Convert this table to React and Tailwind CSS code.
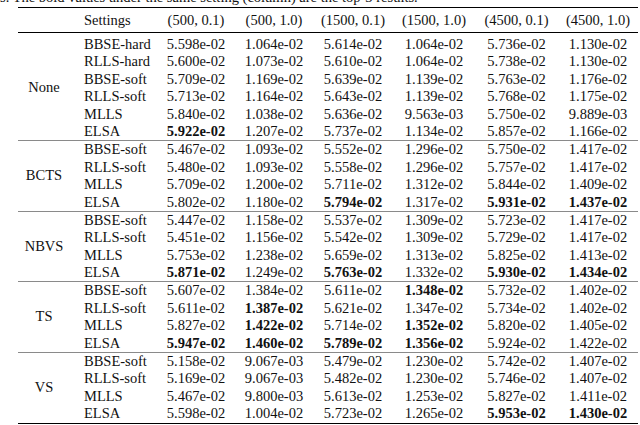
import React from 'react';

const cols = ['(500, 0.1)', '(500, 1.0)', '(1500, 0.1)', '(1500, 1.0)', '(4500, 0.1)', '(4500, 1.0)'];
const colW = ['w-[78px]', 'w-[78px]', 'w-[80px]', 'w-[82px]', 'w-[83px]', 'w-[80px]'];

// a leading * marks a bold value
const groups = [
    {
        name: 'None',
        rows: [
            ['BBSE-hard', '5.598e-02', '1.064e-02', '5.614e-02', '1.064e-02', '5.736e-02', '1.130e-02'],
            ['RLLS-hard', '5.600e-02', '1.073e-02', '5.610e-02', '1.064e-02', '5.738e-02', '1.130e-02'],
            ['BBSE-soft', '5.709e-02', '1.169e-02', '5.639e-02', '1.139e-02', '5.763e-02', '1.176e-02'],
            ['RLLS-soft', '5.713e-02', '1.164e-02', '5.643e-02', '1.139e-02', '5.768e-02', '1.175e-02'],
            ['MLLS', '5.840e-02', '1.038e-02', '5.636e-02', '9.563e-03', '5.750e-02', '9.889e-03'],
            ['ELSA', '*5.922e-02', '1.207e-02', '5.737e-02', '1.134e-02', '5.857e-02', '1.166e-02'],
        ],
    },
    {
        name: 'BCTS',
        rows: [
            ['BBSE-soft', '5.467e-02', '1.093e-02', '5.552e-02', '1.296e-02', '5.750e-02', '1.417e-02'],
            ['RLLS-soft', '5.480e-02', '1.093e-02', '5.558e-02', '1.296e-02', '5.757e-02', '1.417e-02'],
            ['MLLS', '5.709e-02', '1.200e-02', '5.711e-02', '1.312e-02', '5.844e-02', '1.409e-02'],
            ['ELSA', '5.802e-02', '1.180e-02', '*5.794e-02', '1.317e-02', '*5.931e-02', '*1.437e-02'],
        ],
    },
    {
        name: 'NBVS',
        rows: [
            ['BBSE-soft', '5.447e-02', '1.158e-02', '5.537e-02', '1.309e-02', '5.723e-02', '1.417e-02'],
            ['RLLS-soft', '5.451e-02', '1.156e-02', '5.542e-02', '1.309e-02', '5.729e-02', '1.417e-02'],
            ['MLLS', '5.753e-02', '1.238e-02', '5.659e-02', '1.313e-02', '5.825e-02', '1.413e-02'],
            ['ELSA', '*5.871e-02', '1.249e-02', '*5.763e-02', '1.332e-02', '*5.930e-02', '*1.434e-02'],
        ],
    },
    {
        name: 'TS',
        rows: [
            ['BBSE-soft', '5.607e-02', '1.384e-02', '5.611e-02', '*1.348e-02', '5.732e-02', '1.402e-02'],
            ['RLLS-soft', '5.611e-02', '*1.387e-02', '5.621e-02', '1.347e-02', '5.734e-02', '1.402e-02'],
            ['MLLS', '5.827e-02', '*1.422e-02', '5.714e-02', '*1.352e-02', '5.820e-02', '1.405e-02'],
            ['ELSA', '*5.947e-02', '*1.460e-02', '*5.789e-02', '*1.356e-02', '5.924e-02', '1.422e-02'],
        ],
    },
    {
        name: 'VS',
        rows: [
            ['BBSE-soft', '5.158e-02', '9.067e-03', '5.479e-02', '1.230e-02', '5.742e-02', '1.407e-02'],
            ['RLLS-soft', '5.169e-02', '9.067e-03', '5.482e-02', '1.230e-02', '5.746e-02', '1.407e-02'],
            ['MLLS', '5.467e-02', '9.800e-03', '5.613e-02', '1.253e-02', '5.827e-02', '1.411e-02'],
            ['ELSA', '5.598e-02', '1.004e-02', '5.723e-02', '1.265e-02', '*5.953e-02', '*1.430e-02'],
        ],
    },
];

function Cell({ value, w }) {
    const bold = value.startsWith('*');
    return (
        <div className={`${w} text-center ${bold ? 'font-bold' : ''}`}>
            {bold ? value.slice(1) : value}
        </div>
    );
}

export default function App() {
    return (
        <div className="w-[640px] h-[425px] overflow-hidden bg-white text-[#111] text-[14.5px] font-['Liberation_Serif','Times_New_Roman',serif]">
            <div className="-mt-[9.6px] h-[14.5px] leading-none whitespace-nowrap">
                s. The bold values under the same setting (column) are the top-3 results.
            </div>

            <div className="ml-[18px] w-[620px] mt-[2.1px]">
                <div className="h-px bg-black" />
                <div className="flex h-[24px] leading-[24px]">
                    <div className="w-[52px]" />
                    <div className="w-[87px] pl-[14px]">Settings</div>
                    {cols.map((c, i) => (
                        <div key={c} className={`${colW[i]} text-center`}>{c}</div>
                    ))}
                </div>
                <div className="h-px bg-black" />

                <div className="pt-[3px]">
                    {groups.map((g, gi) => (
                        <div key={g.name} className={`flex ${gi > 0 ? 'border-t border-[#8a8a8a]' : ''}`}>
                            <div className="w-[52px] flex items-center justify-center">{g.name}</div>
                            <div className="flex flex-col">
                                {g.rows.map((r) => (
                                    <div key={r[0]} className="flex h-[17.4px] leading-[17.4px]">
                                        <div className="w-[87px] pl-[14px]">{r[0]}</div>
                                        {r.slice(1).map((v, i) => (
                                            <Cell key={i} value={v} w={colW[i]} />
                                        ))}
                                    </div>
                                ))}
                            </div>
                        </div>
                    ))}
                </div>

                <div>
                    <div className="h-px bg-black" />
                    <div className="h-px" />
                    <div className="h-px bg-black" />
                </div>
            </div>
        </div>
    );
}
